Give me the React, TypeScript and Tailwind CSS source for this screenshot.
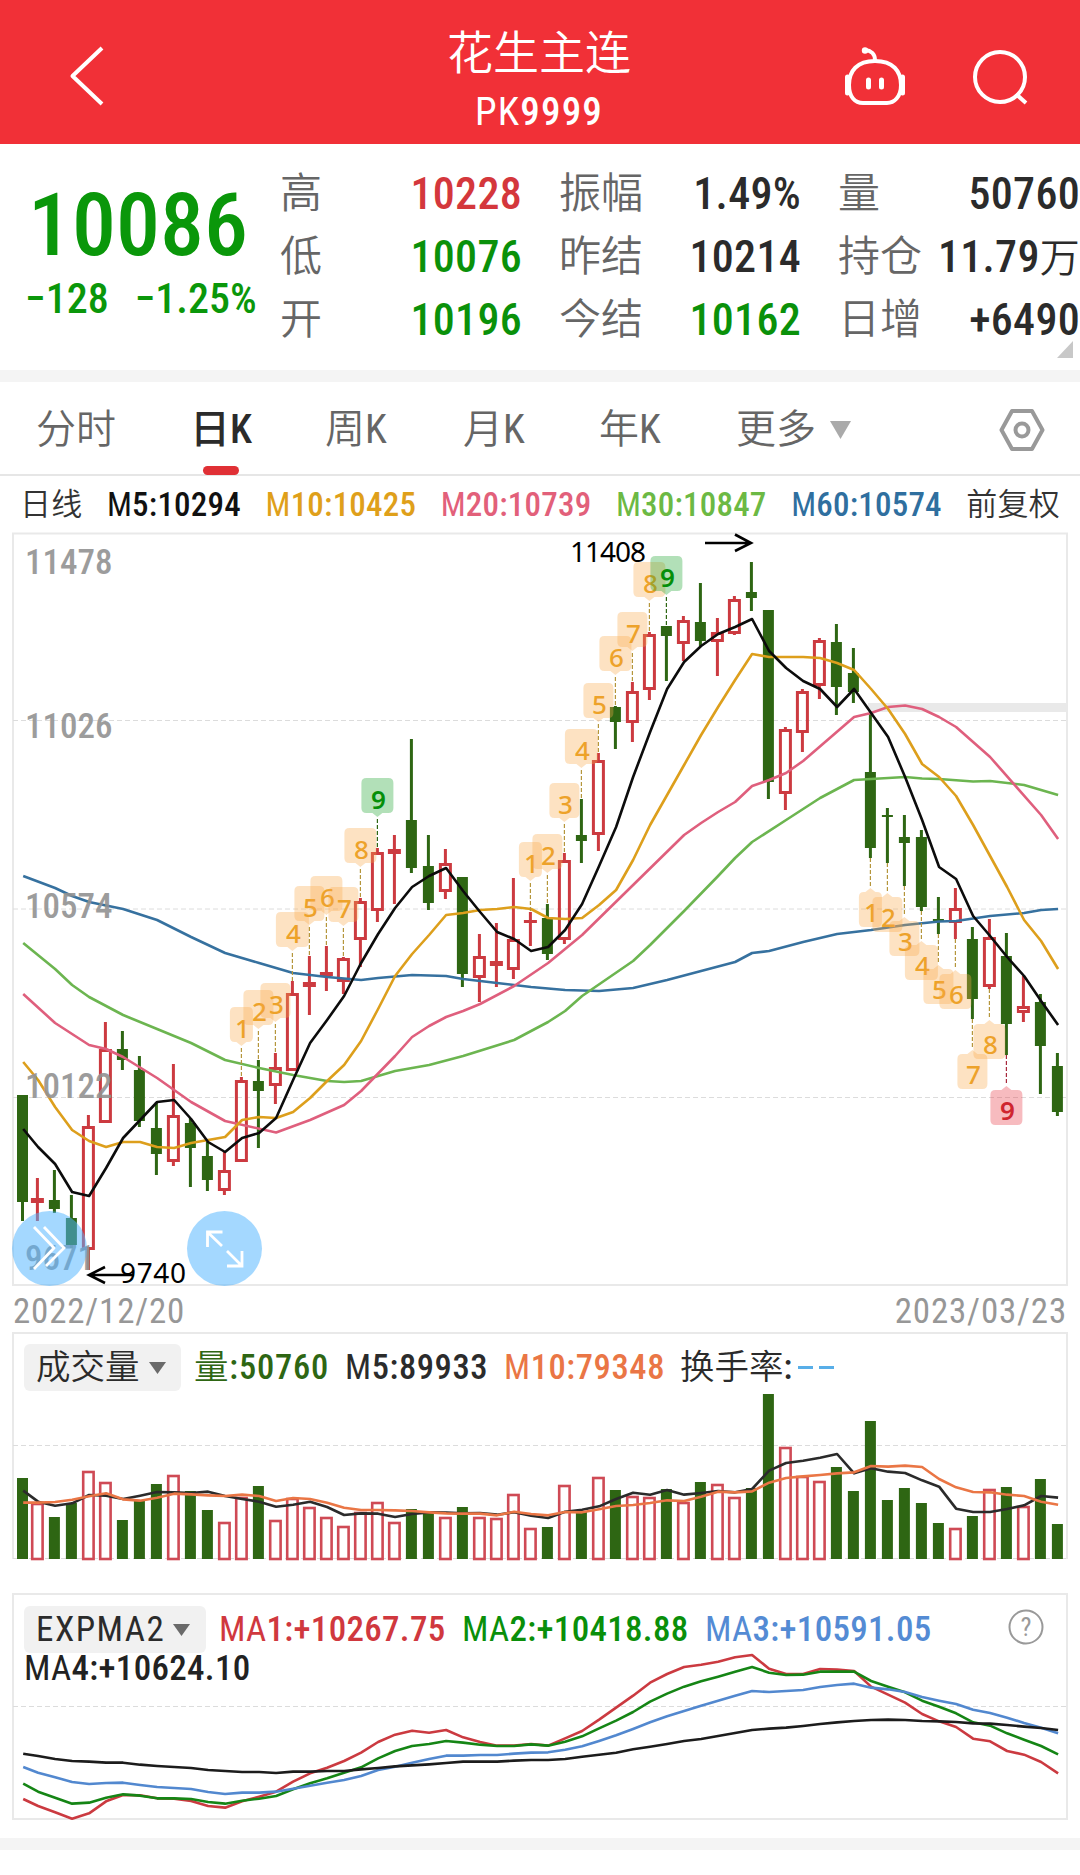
type Candle = ["r" | "g", number, number, number, number];
type Point = [number, number];

const GREEN = "#2e6613";
const RED = "#cc3a40";

// color, high, body top, body bottom, low
const candles: Candle[] = [
  ["g", 1095, 1095, 1202, 1221],
  ["r", 1178, 1198, 1203, 1221],
  ["g", 1170, 1200, 1209, 1213],
  ["g", 1195, 1218, 1245, 1248],
  ["r", 1115, 1126, 1250, 1270],
  ["r", 1022, 1049, 1123, 1123],
  ["g", 1031, 1049, 1060, 1070],
  ["g", 1056, 1070, 1121, 1127],
  ["g", 1102, 1128, 1154, 1175],
  ["r", 1064, 1115, 1162, 1166],
  ["g", 1118, 1123, 1148, 1187],
  ["g", 1142, 1156, 1180, 1191],
  ["r", 1152, 1170, 1191, 1195],
  ["r", 1077, 1080, 1162, 1162],
  ["g", 1060, 1081, 1091, 1148],
  ["r", 1053, 1067, 1086, 1104],
  ["r", 981, 993, 1071, 1071],
  ["r", 956, 982, 987, 1015],
  ["r", 946, 972, 976, 991],
  ["r", 957, 958, 982, 994],
  ["r", 898, 901, 940, 967],
  ["r", 848, 852, 911, 922],
  ["r", 835, 849, 854, 904],
  ["g", 739, 820, 868, 873],
  ["g", 835, 866, 903, 910],
  ["r", 849, 863, 892, 899],
  ["g", 877, 877, 974, 987],
  ["r", 934, 956, 978, 1002],
  ["r", 923, 961, 966, 987],
  ["r", 878, 939, 970, 979],
  ["r", 912, 920, 923, 946],
  ["g", 904, 918, 954, 960],
  ["r", 853, 860, 940, 944],
  ["g", 799, 835, 841, 863],
  ["r", 753, 760, 835, 851],
  ["g", 706, 707, 722, 749],
  ["r", 682, 691, 723, 742],
  ["r", 632, 634, 690, 700],
  ["g", 626, 626, 636, 681],
  ["r", 616, 620, 644, 661],
  ["g", 583, 622, 641, 646],
  ["r", 618, 632, 642, 676],
  ["r", 596, 599, 634, 635],
  ["g", 562, 592, 598, 611],
  ["g", 610, 610, 782, 799],
  ["r", 727, 729, 794, 810],
  ["r", 689, 691, 733, 752],
  ["r", 638, 640, 686, 699],
  ["g", 624, 642, 687, 715],
  ["g", 648, 673, 692, 703],
  ["g", 713, 772, 848, 858],
  ["g", 808, 815, 817, 863],
  ["g", 815, 837, 843, 886],
  ["g", 830, 837, 907, 911],
  ["g", 897, 919, 921, 934],
  ["r", 888, 908, 923, 939],
  ["g", 927, 939, 999, 1019],
  ["r", 919, 937, 987, 989],
  ["g", 933, 956, 1024, 1055],
  ["r", 976, 1006, 1013, 1022],
  ["g", 994, 1002, 1046, 1094],
  ["g", 1053, 1066, 1112, 1116],
];

const m5 = [
  1129, 1147, 1164, 1192, 1196, 1168, 1138, 1120, 1102, 1100, 1119, 1142, 1152, 1138, 1133, 1118,
  1080, 1043, 1020, 996, 963, 934, 908, 887, 876, 868, 891, 912, 932, 939, 951, 947, 930, 904, 866,
  827, 777, 732, 689, 662, 646, 634, 627, 619, 651, 668, 681, 689, 707, 689, 713, 737, 777, 820,
  867, 879, 916, 936, 957, 976, 1001, 1025,
];

const m10 = [
  1062, 1080, 1107, 1130, 1141, 1147, 1142, 1142, 1147, 1148, 1143, 1140, 1137, 1120, 1117, 1118,
  1112, 1098, 1081, 1065, 1041, 1009, 976, 954, 935, 915, 913, 910, 909, 907, 909, 918, 919, 918,
  905, 890, 860, 825, 795, 765, 735, 707, 680, 654, 657, 657, 657, 658, 663, 670, 689, 709, 734,
  764, 777, 796, 825, 856, 887, 920, 941, 969,
];

const m20: Point[] = [
  [0, 994], [2, 1023], [4, 1045], [5, 1049], [6, 1057], [8, 1078], [10, 1102], [12, 1121],
  [15, 1132.5], [17, 1120], [19, 1105], [20, 1091], [22, 1056], [23, 1037], [24, 1026], [25, 1017],
  [26, 1011], [27, 1004], [29, 986], [31, 963], [33, 935], [36, 885], [39, 835], [40, 823],
  [41, 812], [42, 802], [43, 786], [44, 780], [45, 773], [46, 761], [49, 717], [50, 713], [51, 707],
  [52, 705.5], [53, 709], [54, 717], [55, 727], [57, 757], [60, 815], [61, 839],
];

const m30: Point[] = [
  [0, 943], [2, 969], [3, 985], [4, 997], [6, 1015], [8, 1029], [10, 1043], [12, 1060], [14, 1068],
  [16, 1075], [18, 1081], [19, 1082], [20, 1081], [22, 1071], [24, 1065], [26, 1056], [29, 1040],
  [31, 1022], [32, 1011], [33, 996], [36, 961], [37, 945], [39, 911], [41, 876], [42, 858],
  [43, 842], [45, 820], [47, 798], [49, 780], [50, 779], [52, 777], [53, 778.5], [54, 779],
  [56, 781.5], [57, 781], [59, 785], [61, 795],
];

const m60: Point[] = [
  [0, 876], [2, 888], [3, 896], [4, 902], [6, 909], [8, 920], [10, 937], [12, 953], [14, 963],
  [16, 973], [18, 977], [20, 980], [21, 978], [23, 975], [25, 976], [26, 979], [28, 983], [30, 987],
  [32, 990], [34, 991], [36, 988], [38, 980], [40, 971], [42, 962], [43, 953], [44, 951], [46, 942],
  [48, 934], [50, 930], [52, 925], [54, 921.5], [55, 921], [57, 916], [59, 913], [60, 910], [61, 909],
];

// index, label, top of the box
const sellMarks: [number, string, number][] = [
  [13, "1", 1007], [14, "2", 990], [15, "3", 983], [16, "4", 912], [17, "5", 886], [18, "6", 876],
  [19, "7", 887], [20, "8", 828], [21, "9", 778], [30, "1", 842], [31, "2", 834], [32, "3", 783],
  [33, "4", 729], [34, "5", 683], [35, "6", 636], [36, "7", 612], [37, "8", 562], [38, "9", 556],
];

// index, label, bottom of the box
const buyMarks: [number, string, number][] = [
  [50, "1", 927], [51, "2", 932], [52, "3", 956], [53, "4", 980], [54, "5", 1004], [55, "6", 1009],
  [56, "7", 1089], [57, "8", 1059], [58, "9", 1125],
];

const markWidth: Record<string, number> = { "1": 23, "4": 33, "6": 32, "8": 32, "9": 32 };

const volume = [
  81, 55, 42, 56, 87, 76, 39, 58, 75, 83, 68, 49, 36, 61, 73, 38, 60, 51, 41, 32, 46, 56, 36, 50, 46,
  41, 52, 41, 40, 64, 30, 32, 73, 47, 81, 69, 62, 61, 70, 56, 77, 74, 61, 71, 165, 111, 82, 77, 92,
  68, 138, 59, 71, 56, 36, 30, 43, 69, 72, 52, 80, 35,
];

// line data below is kept in thirds of a pixel
const volM5 = [
  512, 545, 557, 550, 525, 527, 537, 527, 516, 517, 519, 515, 528, 537, 545, 560, 554, 545, 561, 585,
  580, 581, 591, 582, 577, 578, 580, 579, 584, 577, 587, 594, 575, 569, 559, 537, 518, 524, 510, 524,
  519, 513, 517, 507, 452, 429, 422, 413, 402, 460, 445, 455, 459, 481, 500, 566, 576, 576, 567, 556,
  528, 533,
];
const volM10 = [
  548, 548, 546, 539, 529, 520, 538, 542, 533, 521, 523, 526, 528, 524, 528, 543, 534, 537, 548, 563,
  570, 570, 571, 573, 577, 580, 581, 581, 586, 575, 582, 586, 576, 577, 568, 558, 555, 549, 541, 543,
  530, 515, 517, 514, 488, 474, 469, 465, 460, 457, 438, 440, 437, 441, 477, 502, 516, 517, 524, 528,
  545, 554,
];

const ma1 = [
  657, 678, 697, 716, 700, 664, 645, 646, 655, 656, 663, 678, 683, 664, 650, 635, 605, 580, 563, 543,
  518, 486, 464, 452, 458, 450, 472, 486, 497, 497, 492, 497, 475, 453, 419, 383, 347, 308, 282, 261,
  254, 245, 232, 225, 266, 282, 282, 267, 269, 273, 320, 344, 368, 402, 424, 441, 476, 484, 513, 524,
  546, 580,
];
const ma2 = [
  611, 635, 653, 671, 668, 653, 643, 647, 655, 655, 657, 666, 671, 662, 656, 648, 628, 610, 595, 578,
  562, 535, 513, 498, 492, 483, 488, 494, 498, 498, 493, 497, 485, 469, 445, 422, 396, 365, 341, 320,
  304, 290, 275, 261, 278, 285, 284, 275, 275, 275, 303, 320, 337, 362, 380, 400, 427, 437, 460, 479,
  498, 523,
];
const ma3 = [
  561, 578, 592, 606, 612, 609, 608, 615, 621, 624, 627, 636, 642, 638, 638, 635, 626, 617, 608, 600,
  588, 570, 560, 548, 537, 527, 527, 525, 525, 521, 518, 517, 509, 499, 483, 466, 447, 427, 409, 393,
  377, 362, 347, 333, 336, 333, 330, 321, 315, 311, 323, 328, 336, 351, 362, 372, 389, 399, 413, 429,
  443, 460,
];
const ma4 = [
  521, 528, 537, 543, 545, 548, 548, 554, 558, 561, 564, 570, 573, 576, 576, 579, 575, 575, 573, 573,
  568, 564, 559, 556, 553, 549, 545, 545, 545, 542, 540, 540, 537, 530, 524, 518, 508, 500, 492, 483,
  477, 468, 459, 450, 446, 443, 438, 432, 427, 423, 420, 419, 420, 423, 424, 426, 430, 431, 435, 440,
  444, 450,
];

const cx = (i: number) => (i === 0 ? 22.5 : 20.4 + 17 * i);

const toPoints = (values: number[], offset = 0, scale = 1) =>
  values.map((v, i) => `${cx(i) + 0.7},${offset + v / scale}`).join(" ");

const pairPoints = (pairs: Point[]) => pairs.map(([i, y]) => `${cx(i) + 0.7},${y}`).join(" ");

function Line({ points, color, width = 2.6 }: { points: string; color: string; width?: number }) {
  return <polyline points={points} fill="none" stroke={color} strokeWidth={width} strokeLinejoin="round" />;
}

function GridLine({ y }: { y: number }) {
  return <line x1="13" x2="1067" y1={y} y2={y} stroke="#dcdcdc" strokeWidth="1" strokeDasharray="5 3" />;
}

function CandleShape({ c, i }: { c: Candle; i: number }) {
  const [type, high, top, bottom, low] = c;
  const x = cx(i);
  if (type === "g") {
    return (
      <g fill={GREEN}>
        <rect x={x - 1.5} y={high} width="3" height={low - high} />
        <rect x={x - 5.5} y={top} width="11" height={bottom - top} />
      </g>
    );
  }
  return (
    <g fill={RED}>
      <rect x={x - 1.5} y={high} width="3" height={top - high} />
      <rect x={x - 1.5} y={bottom} width="3" height={low - bottom} />
      {bottom - top < 6 ? (
        <rect x={x - 6.5} y={top} width="13" height={bottom - top} />
      ) : (
        <rect
          x={x - 5}
          y={top + 1.5}
          width="10"
          height={bottom - top - 3}
          fill="none"
          stroke={RED}
          strokeWidth="3"
        />
      )}
    </g>
  );
}

function Mark({ i, label, y, below }: { i: number; label: string; y: number; below?: boolean }) {
  const x = cx(i);
  const w = markWidth[label] ?? 30;
  const nine = label === "9";
  const fill = !nine ? "rgb(250 170 75 / 0.34)" : below ? "rgb(230 50 60 / 0.33)" : "rgb(20 160 40 / 0.33)";
  const color = !nine ? "#eda22a" : below ? "#cf2630" : "#058f0a";
  const stem = !nine ? "#b5963c" : below ? "#a8283c" : "#2e6613";
  const l = x - w / 2;
  const r = x + w / 2;
  const h = 35;
  const top = below ? y - h : y;
  const bottom = top + h;
  const d = below
    ? `M${l + 5} ${top}H${x - 5}L${x} ${top - 4}L${x + 5} ${top}H${r - 5}Q${r} ${top} ${r} ${top + 5}V${bottom - 5}Q${r} ${bottom} ${r - 5} ${bottom}H${l + 5}Q${l} ${bottom} ${l} ${bottom - 5}V${top + 5}Q${l} ${top} ${l + 5} ${top}Z`
    : `M${l + 5} ${top}H${r - 5}Q${r} ${top} ${r} ${top + 5}V${bottom - 5}Q${r} ${bottom} ${r - 5} ${bottom}H${x + 5}L${x} ${bottom + 4}L${x - 5} ${bottom}H${l + 5}Q${l} ${bottom} ${l} ${bottom - 5}V${top + 5}Q${l} ${top} ${l + 5} ${top}Z`;
  const [, high, , , low] = candles[i];
  return (
    <g>
      <line
        x1={x}
        x2={x}
        y1={below ? low : bottom + 6}
        y2={below ? top - 5 : high}
        stroke={stem}
        strokeWidth="1.2"
        strokeDasharray="4 2"
      />
      <path d={d} fill={fill} />
      <text
        x={x + 1}
        y={top + (below ? 29.5 : 30.5)}
        textAnchor="middle"
        fill={color}
        className={`font-['Noto_Sans',sans-serif] text-[26px] ${nine ? "font-semibold" : "font-medium"}`}
      >
        {label}
      </text>
    </g>
  );
}

function Header() {
  return (
    <header className="flex h-36 items-center justify-between bg-[#f13037] pr-[50px] pl-[68px] text-white">
      <svg width="38" height="64" viewBox="0 0 38 64" className="mt-2 mr-[129px]" fill="none" stroke="currentColor" strokeWidth="4">
        <path d="M34 4 4.500 32 34 60" strokeLinejoin="round" />
      </svg>
      <div className="flex flex-col items-center pt-[22px]">
        <h1 className="text-[46px] leading-[58px] font-[350]">花生主连</h1>
        <span className="text-[39px] leading-[60px] tracking-[1.2px]">
          PK<span className="font-medium">9999</span>
        </span>
      </div>
      <div className="flex items-center gap-[63px] pt-2.5">
        <svg width="66" height="62" viewBox="0 0 66 62" fill="none" stroke="currentColor" strokeWidth="4">
          <path d="M32 15C50 15 58 25 58 39c0 12-7 18-14 18H20C12 57 6 51 6 39 6 25 14 15 32 15Z" />
          <path d="M4.500 31v16M59.500 31v16" strokeWidth="5" strokeLinecap="round" />
          <path d="M32 14C32 8 28 4.500 22 4" strokeLinecap="round" />
          <circle cx="22" cy="4.500" r="3.200" fill="currentColor" stroke="none" />
          <path d="M23.500 34v7M36.500 34v7" strokeWidth="5" strokeLinecap="round" transform="translate(2 0)" />
        </svg>
        <svg width="58" height="58" viewBox="0 0 58 58" fill="none" stroke="currentColor" strokeWidth="4">
          <circle cx="28" cy="29" r="25" />
          <path d="M44 46 54 55" />
        </svg>
      </div>
    </header>
  );
}

const quotes = [
  [
    { label: "高", value: "10228", color: "text-[#d4373c]" },
    { label: "低", value: "10076", color: "text-[#0a910a]" },
    { label: "开", value: "10196", color: "text-[#0a910a]" },
  ],
  [
    { label: "振幅", value: "1.49%", color: "text-[#2b2b2b]" },
    { label: "昨结", value: "10214", color: "text-[#2b2b2b]" },
    { label: "今结", value: "10162", color: "text-[#0a910a]" },
  ],
  [
    { label: "量", value: "50760", color: "text-[#2b2b2b]" },
    { label: "持仓", value: "11.79", unit: "万", color: "text-[#2b2b2b]" },
    { label: "日增", value: "+6490", color: "text-[#2b2b2b]" },
  ],
];

function Quote() {
  return (
    <section className="relative flex h-[226px] pt-[18px]">
      <div className="flex w-[280px] flex-col text-[#0a970a]">
        <div className="pt-[12px] pl-[28px] text-[88px] leading-[102px] font-medium whitespace-nowrap">10086</div>
        <div className="flex gap-[26px] pl-[25px] text-[42px] leading-[46px] font-medium whitespace-nowrap">
          <span>−128</span>
          <span>−1.25%</span>
        </div>
      </div>
      <div className="flex flex-1 gap-[37px]">
        {quotes.map((column, i) => (
          <div key={i} className="flex-1">
            {column.map((q) => (
              <div key={q.label} className="flex h-[63.3px] items-center justify-between text-[44px] leading-none whitespace-nowrap">
                <span className="text-[42px] font-[350] text-[#666]">{q.label}</span>
                <span className={`${q.color} font-medium tracking-[0.3px]`}>
                  {q.value}
                  {q.unit && <span className="text-[40px] font-[350]">{q.unit}</span>}
                </span>
              </div>
            ))}
          </div>
        ))}
      </div>
      <svg width="16" height="17" viewBox="0 0 16 17" className="absolute right-[7px] bottom-[12px]">
        <path d="M16 0V17H0Z" fill="#c8c8c8" />
      </svg>
    </section>
  );
}

function Tabs() {
  return (
    <nav className="flex h-[94px] items-center justify-between border-b-2 border-[#e6e6e6] pt-1 pr-[35px] pl-[36px] text-[40px] leading-none font-[350] text-[#666]">
      <div className="grid grid-cols-[154px_135px_138px_136px_137px_auto] items-center">
        <span>分时</span>
        <span className="relative font-medium text-[#2b2b2b]">
          日K
          <i className="absolute -bottom-[25px] left-[13px] h-[9px] w-9 rounded-full bg-[#e03035]" />
        </span>
        <span>周<span className="font-normal">K</span></span>
        <span>月<span className="font-normal">K</span></span>
        <span>年<span className="font-normal">K</span></span>
        <span className="flex items-center gap-[14px]">
          更多
          <svg width="21" height="18" viewBox="0 0 21 18">
            <path d="M0 0H21L10.500 18Z" fill="#aaa" />
          </svg>
        </span>
      </div>
      <svg width="46" height="44" viewBox="0 0 46 44" fill="none" stroke="#999" strokeWidth="4">
        <path d="M13 3H33L43.500 22 33 41H13L2.500 22Z" strokeLinejoin="round" />
        <circle cx="23" cy="22" r="6.500" />
      </svg>
    </nav>
  );
}

const averages = [
  { name: "M", value: "5:10294", color: "text-[#111]" },
  { name: "M", value: "10:10425", color: "text-[#dfa01a]" },
  { name: "M", value: "20:10739", color: "text-[#e2607a]" },
  { name: "M", value: "30:10847", color: "text-[#6cb944]" },
  { name: "M", value: "60:10574", color: "text-[#2f6f9f]" },
];

function Legend({ name, value, className }: { name: string; value: string; className: string }) {
  return (
    <span className={className}>
      {name}
      <span className="font-medium">{value}</span>
    </span>
  );
}

function Averages() {
  return (
    <div className="flex h-[56px] items-center justify-between pr-[20px] pl-[20px] text-[33px] leading-none tracking-[0.2px] whitespace-nowrap">
      <span className="text-[31px] font-[350] text-[#333]">日线</span>
      {averages.map((a) => (
        <Legend key={a.value} name={a.name} value={a.value} className={a.color} />
      ))}
      <span className="text-[31px] font-[350] text-[#333]">前复权</span>
    </div>
  );
}

function PriceChart() {
  const labels: [string, number][] = [
    ["11478", 574],
    ["11026", 738],
    ["10574", 918],
    ["10122", 1097.5],
    ["9671", 1269.5],
  ];
  return (
    <svg width="1080" height="766" viewBox="0 532 1080 766" className="block">
      <rect x="13" y="533.500" width="1054" height="751.500" fill="none" stroke="#e9e9e9" strokeWidth="2" />
      <GridLine y={720.5} />
      <GridLine y={909} />
      <GridLine y={1097.5} />
      <rect x="868" y="703" width="199" height="9" fill="#e9e9e9" />
      {candles.map((c, i) => (
        <CandleShape key={i} c={c} i={i} />
      ))}
      <Line points={pairPoints(m60)} color="#36719f" />
      <Line points={pairPoints(m30)} color="#6cb550" />
      <Line points={pairPoints(m20)} color="#df5f7d" />
      <Line points={toPoints(m10)} color="#dd9f1c" />
      <Line points={toPoints(m5)} color="#0c0c0c" />
      {sellMarks.map(([i, label, y]) => (
        <Mark key={i} i={i} label={label} y={y} />
      ))}
      {buyMarks.map(([i, label, y]) => (
        <Mark key={i} i={i} label={label} y={y} below />
      ))}
      <g fill="#929292" className="text-[35px] font-medium">
        {labels.map(([t, y]) => (
          <text key={t} x="25" y={y} opacity="0.9">
            {t}
          </text>
        ))}
      </g>
      <g className="font-['Noto_Sans',sans-serif] text-[28px]" fill="#000">
        <text x="570" y="562" textLength="76">11408</text>
        <text x="120" y="1283" textLength="66">9740</text>
      </g>
      <g fill="none" stroke="#000" strokeWidth="2.6">
        <path d="M705 543H751M735 534.500 751 543 735 551" />
        <path d="M134 1275H89M105 1267 89 1275 105 1283" />
      </g>
      <circle cx="49.500" cy="1248.500" r="37.500" fill="rgb(81 181 255 / 0.52)" />
      <circle cx="224.500" cy="1248.500" r="37.500" fill="rgb(81 181 255 / 0.52)" />
      <g fill="none" stroke="#fff" strokeWidth="2.8">
        <path d="M34 1227 54 1248 34 1269M44 1227 64 1248 46 1266" />
        <path d="M207.500 1247V1232H222.500M208 1232.500 222 1246M242 1251V1266H227M241.500 1265.500 227 1251" />
      </g>
    </svg>
  );
}

function Caret() {
  return (
    <svg width="17" height="12" viewBox="0 0 17 12">
      <path d="M0 0H17L8.500 12Z" fill="#6a6a6a" />
    </svg>
  );
}

function VolumePanel() {
  const base = 1559;
  return (
    <section className="relative">
      <svg width="1080" height="229" viewBox="0 1332 1080 229" className="block">
        <path d="M13 1559V1333H1067V1559" fill="none" stroke="#e9e9e9" strokeWidth="2" />
        <GridLine y={1445.5} />
        <GridLine y={1558.5} />
        {volume.map((v, i) =>
          candles[i][0] === "g" ? (
            <rect key={i} x={cx(i) - 5.5} y={base - v} width="11" height={v} fill={GREEN} />
          ) : (
            <rect
              key={i}
              x={cx(i) - 5.2}
              y={base - v}
              width="10.4"
              height={v}
              fill="#fff"
              stroke="#cf4a55"
              strokeWidth="2.6"
            />
          ),
        )}
        <Line points={toPoints(volM5, 1320, 3)} color="#2b2b2b" />
        <Line points={toPoints(volM10, 1320, 3)} color="#ea7645" />
      </svg>
      <div className="absolute top-3 left-6 flex h-[47px] items-center text-[34.500px] leading-none whitespace-nowrap">
        <button className="flex h-[47px] w-[157px] items-center gap-[9px] rounded-md bg-[#f1f1f1] pl-3 font-[350] text-[#2b2b2b]">
          成交量
          <Caret />
        </button>
        <span className="ml-[13px] w-[151px] font-medium tracking-[0.800px] text-[#2e6613]">
          <span className="font-[350]">量</span>:50760
        </span>
        <Legend name="M" value="5:89933" className="w-[159px] tracking-[0.600px] text-[#2b2b2b]" />
        <Legend name="M" value="10:79348" className="w-[176px] tracking-[0.600px] text-[#ea7645]" />
        <span className="font-[350] text-[#2b2b2b]">
          换手率<span className="font-medium">:</span>
        </span>
        <span className="ml-1.5 flex gap-1.5">
          <i className="h-[3px] w-[15px] bg-[#58aee8]" />
          <i className="h-[3px] w-[15px] bg-[#58aee8]" />
        </span>
      </div>
    </section>
  );
}

function ExpmaPanel() {
  return (
    <section className="relative mt-[32px]">
      <svg width="1080" height="228" viewBox="0 1593 1080 228" className="block">
        <rect x="13" y="1594" width="1054" height="225" fill="none" stroke="#e9e9e9" strokeWidth="2" />
        <GridLine y={1706.5} />
        <Line points={toPoints(ma1, 1580, 3)} color="#cb3a40" />
        <Line points={toPoints(ma2, 1580, 3)} color="#158515" />
        <Line points={toPoints(ma3, 1580, 3)} color="#5288cf" />
        <Line points={toPoints(ma4, 1580, 3)} color="#1c1c1c" />
      </svg>
      <div className="absolute top-3 left-6 text-[35px] leading-none tracking-[0.300px] whitespace-nowrap">
        <div className="flex h-[49px] items-center">
          <button className="flex h-[47px] w-[182px] items-center gap-[8px] rounded-md bg-[#f1f1f1] pl-3 tracking-[1.500px] text-[#2b2b2b]">
            EXPMA2
            <Caret />
          </button>
          <Legend name="MA" value="1:+10267.75" className="ml-[13px] w-[243px] text-[#d0383e]" />
          <Legend name="MA" value="2:+10418.88" className="w-[243px] text-[#0a8f0a]" />
          <Legend name="MA" value="3:+10591.05" className="text-[#548bd4]" />
        </div>
        <div className="leading-[30px] text-[#222]">
          <Legend name="MA" value="4:+10624.10" className="text-[#222]" />
        </div>
      </div>
      <svg width="36" height="36" viewBox="0 0 36 36" className="absolute top-4 right-[36px]">
        <circle cx="18" cy="18" r="16.500" fill="none" stroke="#999" strokeWidth="2" />
        <text x="18" y="27" textAnchor="middle" fill="#999" className="text-[26px]">?</text>
      </svg>
    </section>
  );
}

export default function App() {
  return (
    <div className="h-[1875px] w-[1080px] overflow-hidden bg-white font-['Roboto_Condensed','Noto_Sans_CJK_SC',sans-serif]">
      <Header />
      <Quote />
      <div className="h-3 bg-[#f4f4f4]" />
      <Tabs />
      <Averages />
      <PriceChart />
      <div className="flex h-[34px] items-start justify-between px-[13px] text-[35px] leading-[28px] tracking-[0.800px] text-[#979797]">
        <span>2022/12/20</span>
        <span>2023/03/23</span>
      </div>
      <VolumePanel />
      <ExpmaPanel />
      <div className="mt-[17px] h-3 bg-[#f4f4f4]" />
    </div>
  );
}
